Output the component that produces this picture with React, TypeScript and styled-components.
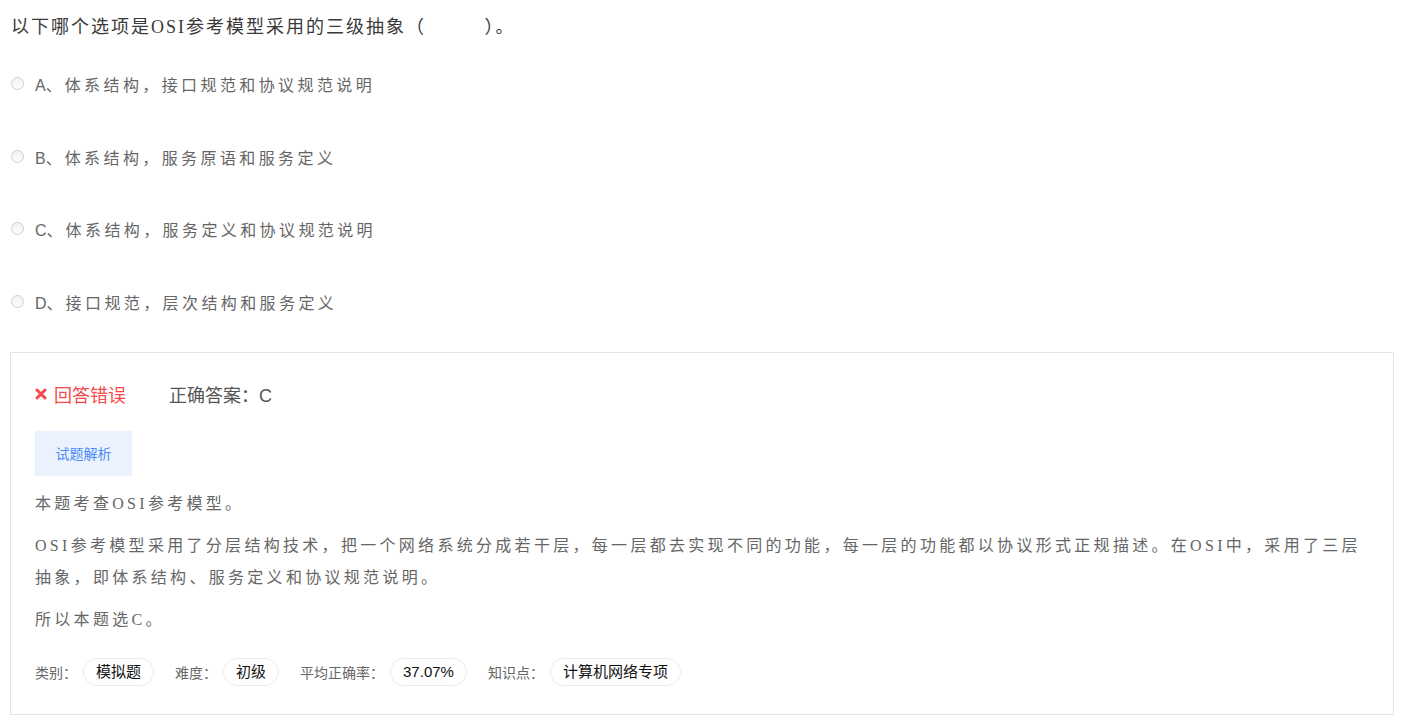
import * as React from 'react';
import styled, { createGlobalStyle } from 'styled-components';

const GlobalStyle = createGlobalStyle`
  html, body {
    margin: 0;
    padding: 0;
    background: #fff;
  }
  body {
    font-family: "Liberation Sans", "Noto Sans CJK SC", sans-serif;
  }
`;

const options = [
  { key: 'A', text: '体系结构，接口规范和协议规范说明' },
  { key: 'B', text: '体系结构，服务原语和服务定义' },
  { key: 'C', text: '体系结构，服务定义和协议规范说明' },
  { key: 'D', text: '接口规范，层次结构和服务定义' },
];

const tags = [
  { label: '类别：', value: '模拟题' },
  { label: '难度：', value: '初级' },
  { label: '平均正确率：', value: '37.07%' },
  { label: '知识点：', value: '计算机网络专项' },
];

const CrossIcon = () => (
  <svg width="12" height="12" viewBox="0 0 12 12">
    <path
      d="M2 2 L10 10 M10 2 L2 10"
      stroke="#f44a4a"
      strokeWidth="3"
      strokeLinecap="round"
    />
  </svg>
);

export default function App() {
  return (
    <Page>
      <GlobalStyle />
      <Question>
        以下哪个选项是OSI参考模型采用的三级抽象（&nbsp;&nbsp;&nbsp;&nbsp;&nbsp;&nbsp;&nbsp;&nbsp;&nbsp;）。
      </Question>
      <OptionList>
        {options.map((o) => (
          <Option key={o.key}>
            <Radio />
            <OptionKey>{o.key}、</OptionKey>
            <span>{o.text}</span>
          </Option>
        ))}
      </OptionList>
      <Card>
        <ResultRow>
          <Wrong>
            <CrossIcon />
            回答错误
          </Wrong>
          <Answer>正确答案：C</Answer>
        </ResultRow>
        <AnalysisTab type="button">试题解析</AnalysisTab>
        <Explain>
          <p>本题考查OSI参考模型。</p>
          <p>
            OSI参考模型采用了分层结构技术，把一个网络系统分成若干层，每一层都去实现不同的功能，每一层的功能都以协议形式正规描述。在OSI中，采用了三层抽象，即体系结构、服务定义和协议规范说明。
          </p>
          <p>所以本题选C。</p>
        </Explain>
        <TagRow>
          {tags.map((t) => (
            <React.Fragment key={t.label}>
              <TagLabel>{t.label}</TagLabel>
              <Tag>{t.value}</Tag>
            </React.Fragment>
          ))}
        </TagRow>
      </Card>
    </Page>
  );
}

const Page = styled.div`
  padding: 12px 16px 12px 10px;
`;

const Question = styled.div`
  padding-left: 1px;
  font-family: "Liberation Serif", "Noto Sans CJK SC", serif;
  font-size: 18px;
  line-height: 30px;
  letter-spacing: 2px;
  color: #3a3a3a;
`;

const OptionList = styled.div`
  display: flex;
  flex-direction: column;
  gap: 48.5px;
  margin-top: 30px;
  padding-left: 1px;
`;

const Option = styled.label`
  display: flex;
  align-items: center;
  height: 24px;
  font-size: 16px;
  letter-spacing: 3.4px;
  color: #666;
`;

const Radio = styled.span`
  box-sizing: border-box;
  width: 13px;
  height: 13px;
  border-radius: 50%;
  border: 1px solid #cfcfcf;
  background: linear-gradient(#f2f2f2, #fdfdfd);
  margin-right: 11px;
  margin-top: -1px;
  flex-shrink: 0;
`;

const OptionKey = styled.span`
  letter-spacing: 0;
  margin-right: 3px;
`;

const Card = styled.div`
  margin-top: 38px;
  border: 1px solid #e3e3e3;
  padding: 29px 24px 28px 24px;
`;

const ResultRow = styled.div`
  display: flex;
  align-items: center;
  height: 24px;
  font-size: 18px;
`;

const Wrong = styled.span`
  display: flex;
  align-items: center;
  gap: 7px;
  color: #f44a4a;
  margin-right: 43px;
  svg {
    margin-top: 1px;
  }
`;

const Answer = styled.span`
  color: #555;
`;

const AnalysisTab = styled.button`
  display: block;
  margin-top: 25px;
  width: 97px;
  height: 45px;
  border: none;
  background: #ebf2fe;
  color: #4a8cf6;
  font-family: "Liberation Sans", "Noto Sans CJK SC", sans-serif;
  font-size: 14px;
  padding: 0;
`;

const Explain = styled.div`
  margin-top: 12px;
  font-family: "Liberation Serif", "Noto Sans CJK SC", serif;
  font-size: 16px;
  line-height: 32px;
  letter-spacing: 3.3px;
  color: #666;

  p {
    margin: 0 0 10px;
  }
`;

const TagRow = styled.div`
  display: flex;
  align-items: center;
  margin-top: 22px;
`;

const TagLabel = styled.span`
  font-size: 14px;
  color: #666;
  margin-right: 6px;
`;

const Tag = styled.span`
  box-sizing: border-box;
  height: 28px;
  line-height: 26px;
  padding: 0 12px;
  border: 1px solid #ececec;
  border-radius: 14px;
  font-size: 15px;
  color: #111;
  margin-right: 21px;
`;
